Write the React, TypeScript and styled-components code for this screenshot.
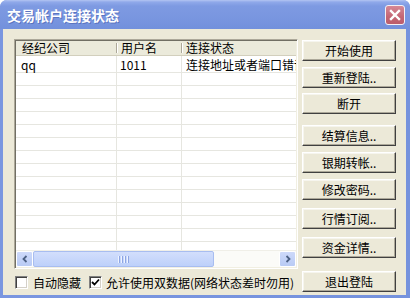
import React from "react";
import styled, { createGlobalStyle } from "styled-components";

const GlobalStyle = createGlobalStyle`
  html, body { margin: 0; padding: 0; background: #ffffff; }
  body {
    font-family: "Noto Sans CJK SC", "Liberation Sans", sans-serif;
    font-size: 12px;
    color: #000;
  }
  * { box-sizing: border-box; }
`;

const Window = styled.div`
  width: 410px;
  height: 298px;
  display: flex;
  flex-direction: column;
  border-radius: 7px 7px 0 0;
  overflow: hidden;
  background: #7592DD;
`;

const TitleBar = styled.div`
  height: 29px;
  flex: none;
  display: flex;
  align-items: center;
  justify-content: space-between;
  padding: 0 5px 0 7px;
  background: linear-gradient(
    to bottom,
    #b3c5f2 0px,
    #90a9ea 2px,
    #7e9ae2 6px,
    #7895df 20px,
    #7290dc 29px
  );
`;

const Title = styled.span`
  color: #ffffff;
  font-size: 14px;
  font-weight: bold;
  line-height: 18px;
  text-shadow: 1px 1px 0 #5a74c0;
`;

const CloseButton = styled.div`
  width: 20px;
  height: 20px;
  border: 1px solid #f4f0f4;
  border-radius: 3px;
  background: linear-gradient(to bottom, #d58896, #c46674 60%, #bb5d6c);
  display: flex;
  align-items: center;
  justify-content: center;
`;

const Frame = styled.div`
  flex: 1;
  display: flex;
  padding: 0 4px 3px 3px;
  background: linear-gradient(to right, #7a96e0, #7592dd);
`;

const Client = styled.div`
  flex: 1;
  display: flex;
  background: #ece9d8;
  padding: 10px 10px 0 11px;
`;

const LeftColumn = styled.div`
  width: 284px;
  display: flex;
  flex-direction: column;
`;

const RightColumn = styled.div`
  width: 94px;
  margin-left: 4px;
  display: flex;
  flex-direction: column;
  padding-top: 1px;
`;

const ListView = styled.div`
  width: 284px;
  height: 230px;
  border: 1px solid;
  border-color: #aca899 #ffffff #ffffff #aca899;
  box-shadow: inset 1px 1px 0 #716f64, inset -1px -1px 0 #f1efe2;
  padding: 1px;
  background: #ffffff;
  display: flex;
  flex-direction: column;
`;

const HeaderRow = styled.div`
  height: 15px;
  flex: none;
  display: grid;
  grid-template-columns: 101px 65px 1fr;
  background: #ebeadb;
  border-bottom: 1px solid #d2cfbd;
`;

const HeaderCell = styled.div<{ $sep?: boolean; $pad: number }>`
  position: relative;
  padding-left: ${(p) => p.$pad}px;
  line-height: 14px;
  white-space: nowrap;
  ${(p) =>
    p.$sep
      ? `&::after {
    content: "";
    position: absolute;
    right: 0;
    top: 2px;
    bottom: 2px;
    width: 1px;
    background: #aca899;
    box-shadow: 1px 0 0 #ffffff;
  }`
      : ""}
`;

const Body = styled.div`
  flex: 1;
  overflow: hidden;
  display: flex;
  flex-direction: column;
`;

const Row = styled.div<{ $h: number }>`
  height: ${(p) => p.$h}px;
  flex: none;
  display: grid;
  grid-template-columns: 101px 65px 1fr;
  border-bottom: 1px solid #e6e6e0;
`;

const Cell = styled.div<{ $line?: boolean; $pad: number; $clip?: boolean }>`
  padding-left: ${(p) => p.$pad}px;
  white-space: nowrap;
  overflow: ${(p) => (p.$clip ? "hidden" : "visible")};
  display: flex;
  align-items: center;
  line-height: 13px;
  border-right: ${(p) => (p.$line ? "1px solid #e6e6e0" : "none")};
`;

const ScrollBar = styled.div`
  height: 17px;
  flex: none;
  display: flex;
  align-items: stretch;
  background: #fbfbf8;
  border-top: 1px solid #f0efe8;
`;

const ScrollArrow = styled.div`
  width: 17px;
  flex: none;
  border: 1px solid #ffffff;
  border-radius: 2px;
  background: linear-gradient(to bottom, #cdd9fa, #b9cbf5);
  display: flex;
  align-items: center;
  justify-content: center;
`;

const Thumb = styled.div`
  width: 181px;
  flex: none;
  border: 1px solid #a8bdf0;
  border-radius: 2px;
  background: linear-gradient(to bottom, #d2defc, #bdd0fa);
  display: flex;
  align-items: center;
  justify-content: center;
  gap: 1px;
`;

const Grip = styled.span`
  width: 1px;
  height: 7px;
  background: #eef3ff;
  box-shadow: 1px 0 0 #8ea6e4;
  margin-right: 1px;
`;

const Track = styled.div`
  flex: 1;
`;

const OptionsRow = styled.div`
  display: flex;
  align-items: center;
  padding-top: 7px;
  padding-left: 1px;
  height: 20px;
`;

const CheckBox = styled.span<{ $ml: number }>`
  width: 13px;
  height: 13px;
  flex: none;
  margin-left: ${(p) => p.$ml}px;
  background: #ffffff;
  border: 1px solid;
  border-color: #808080 #ffffff #ffffff #808080;
  box-shadow: inset 1px 1px 0 #404040, inset -1px -1px 0 #d4d0c8;
  display: flex;
  align-items: center;
  justify-content: center;
`;

const OptionLabel = styled.span<{ $ml: number }>`
  margin-left: ${(p) => p.$ml}px;
  white-space: nowrap;
  line-height: 13px;
`;

const Button = styled.div<{ $mt: number }>`
  height: 21px;
  margin-top: ${(p) => p.$mt}px;
  flex: none;
  background: #ece9d8;
  border: 1px solid;
  border-color: #ffffff #404040 #404040 #ffffff;
  box-shadow: inset -1px -1px 0 #aca899, inset 1px 1px 0 #f6f5ee;
  display: flex;
  align-items: center;
  justify-content: center;
  line-height: 13px;
  white-space: nowrap;
`;

const buttons: { label: string; mt: number }[] = [
  { label: "开始使用", mt: 0 },
  { label: "重新登陆..", mt: 6 },
  { label: "断开", mt: 5 },
  { label: "结算信息..", mt: 11 },
  { label: "银期转帐..", mt: 6 },
  { label: "修改密码..", mt: 6 },
  { label: "行情订阅..", mt: 8 },
  { label: "资金详情..", mt: 8 },
  { label: "退出登陆", mt: 13 },
];

const data = [{ broker: "qq", user: "1011", status: "连接地址或者端口错误" }];

export default function App() {
  const emptyRows = Array.from({ length: 14 });
  return (
    <>
      <GlobalStyle />
      <Window>
        <TitleBar>
          <Title>交易帐户连接状态</Title>
          <CloseButton>
            <svg width="12" height="12" viewBox="0 0 12 12">
              <path
                d="M2 2 L10 10 M10 2 L2 10"
                stroke="#ffffff"
                strokeWidth="2.4"
                strokeLinecap="square"
              />
            </svg>
          </CloseButton>
        </TitleBar>
        <Frame>
          <Client>
            <LeftColumn>
              <ListView>
                <HeaderRow>
                  <HeaderCell $sep $pad={6}>经纪公司</HeaderCell>
                  <HeaderCell $sep $pad={4}>用户名</HeaderCell>
                  <HeaderCell $pad={4}>连接状态</HeaderCell>
                </HeaderRow>
                <Body>
                  {data.map((r) => (
                    <Row key={r.broker} $h={17}>
                      <Cell $line $pad={5}>{r.broker}</Cell>
                      <Cell $line $pad={3}>{r.user}</Cell>
                      <Cell $pad={4} $clip>{r.status}</Cell>
                    </Row>
                  ))}
                  {emptyRows.map((_, i) => (
                    <Row key={i} $h={13}>
                      <Cell $line $pad={5} />
                      <Cell $line $pad={3} />
                      <Cell $pad={4} />
                    </Row>
                  ))}
                </Body>
                <ScrollBar>
                  <ScrollArrow>
                    <svg width="8" height="8" viewBox="0 0 8 8">
                      <path d="M5.5 1 L2.5 4 L5.5 7" stroke="#4d6185" strokeWidth="1.8" fill="none" />
                    </svg>
                  </ScrollArrow>
                  <Thumb>
                    <Grip />
                    <Grip />
                    <Grip />
                    <Grip />
                  </Thumb>
                  <Track />
                  <ScrollArrow>
                    <svg width="8" height="8" viewBox="0 0 8 8">
                      <path d="M2.5 1 L5.5 4 L2.5 7" stroke="#4d6185" strokeWidth="1.8" fill="none" />
                    </svg>
                  </ScrollArrow>
                </ScrollBar>
              </ListView>
              <OptionsRow>
                <CheckBox $ml={0} />
                <OptionLabel $ml={5}>自动隐藏</OptionLabel>
                <CheckBox $ml={8}>
                  <svg width="9" height="9" viewBox="0 0 9 9">
                    <path d="M1 4 L3.5 6.5 L8 1.5" stroke="#000" strokeWidth="1.8" fill="none" />
                  </svg>
                </CheckBox>
                <OptionLabel $ml={4}>允许使用双数据(网络状态差时勿用)</OptionLabel>
              </OptionsRow>
            </LeftColumn>
            <RightColumn>
              {buttons.map((b) => (
                <Button key={b.label} $mt={b.mt}>
                  {b.label}
                </Button>
              ))}
            </RightColumn>
          </Client>
        </Frame>
      </Window>
    </>
  );
}
